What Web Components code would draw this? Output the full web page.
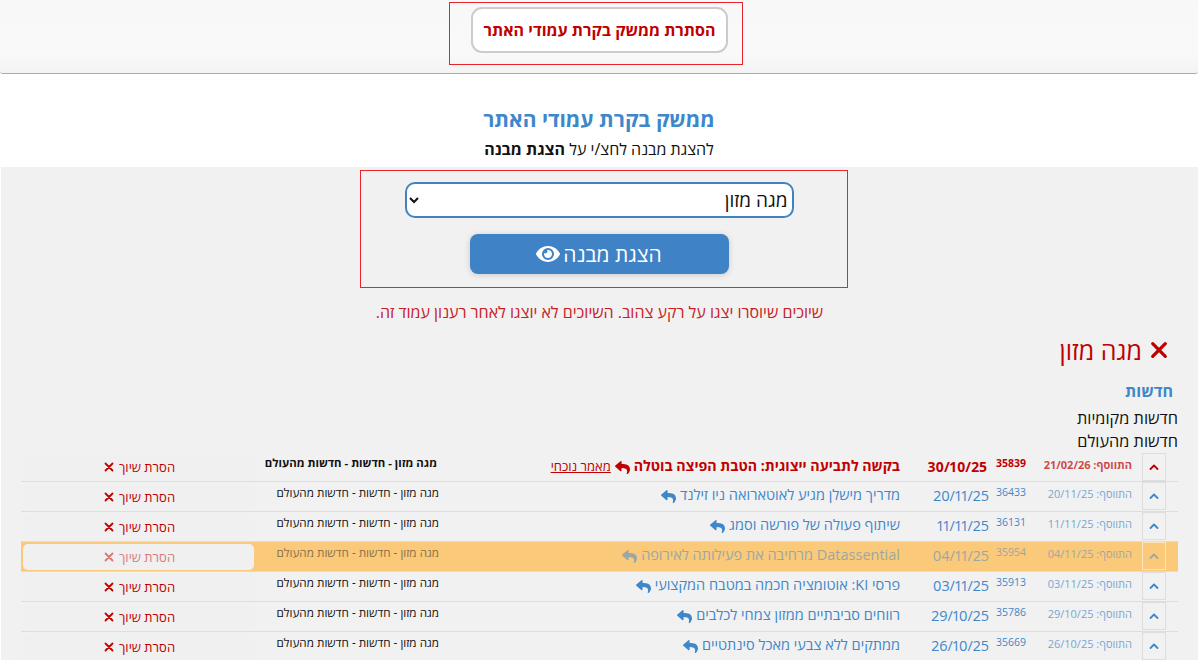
<!DOCTYPE html>
<html lang="he" dir="rtl">
<head>
<meta charset="utf-8">
<title>ממשק בקרת עמודי האתר</title>
<style>
  html, body { margin: 0; height: 660px; overflow: hidden; background: #fff; }
  body { font-family: "Open Sans", "Noto Sans", "Liberation Sans", sans-serif; color: #111; }
</style>
</head>
<body>
<top-bar></top-bar>
<panel-head></panel-head>
<div style="background:#f1f1f1;margin-inline-end:1px;height:493px;overflow:hidden">
  <structure-picker></structure-picker>
  <structure-view name="מגה מזון" section="חדשות">
    <span slot="subs">חדשות מקומיות</span>
    <span slot="subs">חדשות מהעולם</span>
    <link-row current added="21/02/26" num="35839" date="30/10/25" headline="בקשה לתביעה ייצוגית: הטבת הפיצה בוטלה"></link-row>
    <link-row added="20/11/25" num="36433" date="20/11/25" headline="מדריך מישלן מגיע לאוטארואה ניו זילנד"></link-row>
    <link-row added="11/11/25" num="36131" date="11/11/25" headline="שיתוף פעולה של פורשה וסמג"></link-row>
    <link-row removed added="04/11/25" num="35954" date="04/11/25" headline="Datassential מרחיבה את פעילותה לאירופה"></link-row>
    <link-row added="03/11/25" num="35913" date="03/11/25" headline="פרסי KI: אוטומציה חכמה במטבח המקצועי"></link-row>
    <link-row added="29/10/25" num="35786" date="29/10/25" headline="רווחים סביבתיים ממזון צמחי לכלבים"></link-row>
    <link-row added="26/10/25" num="35669" date="26/10/25" headline="ממתקים ללא צבעי מאכל סינתטיים"></link-row>
  </structure-view>
</div>

<script>
const ICONS = {
  reply: '<svg viewBox="0 0 512 512" fill="currentColor"><path d="M11.093 156.652l176.004-151.985C202.495-8.656 224 2.12 224 24.008v80.05c160.629 1.839 288 34.032 288 186.258 0 61.441-39.581 122.309-83.333 154.132-13.653 9.931-33.111-2.533-28.077-18.631 45.344-145.012-21.507-183.51-176.59-185.742V328c0 21.92-21.524 32.648-36.903 19.343l-176.004-152c-11.07-9.561-11.086-29.13 0-38.691z"/></svg>',
  eye: '<svg viewBox="0 0 576 512" fill="currentColor"><path d="M572.52 241.4C518.29 135.59 410.93 64 288 64S57.68 135.64 3.48 241.41a32.35 32.35 0 0 0 0 29.19C57.71 376.41 165.07 448 288 448s230.32-71.64 284.52-177.41a32.35 32.35 0 0 0 0-29.19zM288 400a144 144 0 1 1 144-144 143.93 143.93 0 0 1-144 144zm0-240a95.31 95.31 0 0 0-25.31 3.79 47.85 47.85 0 0 1-66.9 66.9A95.78 95.78 0 1 0 288 160z"/></svg>',
  times: '<svg viewBox="0 0 20 20" fill="none" stroke="currentColor" stroke-width="3.6" stroke-linecap="round"><path d="M3 3l14 14M17 3L3 17"/></svg>',
  up: '<svg viewBox="0 0 20 20" fill="none" stroke="currentColor" stroke-width="3.6" stroke-linecap="round" stroke-linejoin="round"><path d="M3 14l7-7 7 7"/></svg>'
};

class TopBar extends HTMLElement {
  constructor() {
    super();
    this.attachShadow({ mode: "open" }).innerHTML = `
      <style>
        :host {
          display: flex;
          justify-content: center;
          box-sizing: border-box;
          height: 74px;
          padding-top: 2px;
          background: linear-gradient(#f8f8f8, #f9f9f9 70%, #f4f4f4);
          border-bottom: 1px solid #aaa;
          border-radius: 0 0 3px 3px;
        }
        .frame {
          box-sizing: border-box;
          width: 294px;
          height: 63px;
          margin-right: 7px;
          border: 1px solid #e8252b;
          display: flex;
          justify-content: center;
          padding: 4px 0 0 8px;
        }
        button {
          box-sizing: border-box;
          width: 257px;
          height: 46px;
          background: #fff;
          border: 2px solid #ccc;
          border-radius: 11px;
          color: #c00000;
          font: 700 16px "Open Sans", sans-serif;
          padding: 0;
        }
      </style>
      <div class="frame"><button>הסתרת ממשק בקרת עמודי האתר</button></div>`;
  }
}

class PanelHead extends HTMLElement {
  constructor() {
    super();
    this.attachShadow({ mode: "open" }).innerHTML = `
      <style>
        :host {
          display: block;
          height: 93px;
          box-sizing: border-box;
          padding-top: 30px;
          text-align: center;
          background: #fff;
        }
        h2 {
          margin: 0;
          color: #3f87cb;
          font-size: 21px;
          font-weight: 700;
          line-height: 30px;
        }
        p { margin: 4px 0 0; font-size: 16px; line-height: 22px; color: #111; }
      </style>
      <h2>ממשק בקרת עמודי האתר</h2>
      <p>להצגת מבנה לחצ/י על <b>הצגת מבנה</b></p>`;
  }
}

class StructurePicker extends HTMLElement {
  constructor() {
    super();
    this.attachShadow({ mode: "open" }).innerHTML = `
      <style>
        :host {
          display: flex;
          flex-direction: column;
          align-items: center;
          text-align: center;
          padding-top: 3px;
        }
        .frame {
          box-sizing: border-box;
          width: 488px;
          height: 118px;
          margin-left: 8px;
          border: 1px solid #e8252b;
          display: flex;
          flex-direction: column;
          align-items: center;
          padding: 11px 9px 0 0;
          gap: 16px;
        }
        select {
          box-sizing: border-box;
          width: 389px;
          height: 36px;
          border: 2px solid #3f83c6;
          border-radius: 10px;
          background: #fff;
          color: #111;
          font: 19px "Open Sans", sans-serif;
          padding: 0 0 0 4px;
        }
        button {
          box-sizing: border-box;
          width: 259px;
          height: 40px;
          border: 0;
          border-radius: 8px;
          background: #3f83c6;
          color: #fff;
          font: 500 21px "Open Sans", sans-serif;
          box-shadow: 0 1px 6px rgba(0,0,0,.16);
          display: flex;
          align-items: center;
          justify-content: center;
          gap: 3px;
          padding: 0;
        }
        svg { width: 24px; height: 22px; display: block; }
        p { margin: 15px 0 0; color: #c8201f; font-size: 16px; line-height: 18px; }
      </style>
      <div class="frame">
        <select><option>מגה מזון</option></select>
        <button>הצגת מבנה ${ICONS.eye}</button>
      </div>
      <p>שיוכים שיוסרו יצגו על רקע צהוב. השיוכים לא יוצגו לאחר רענון עמוד זה.</p>`;
  }
}

class StructureView extends HTMLElement {
  constructor() {
    super();
    const name = this.getAttribute("name");
    const section = this.getAttribute("section");
    this.attachShadow({ mode: "open" }).innerHTML = `
      <style>
        :host { display: block; padding: 9px 20px 0 20px; }
        h3 {
          margin: 0 10px 0 0;
          display: flex;
          align-items: center;
          gap: 8px;
          color: #c00000;
          font-size: 25px;
          font-weight: 400;
          line-height: 40px;
        }
        h3 svg { width: 18px; height: 18px; }
        h4 {
          margin: 10px 5px 0 0;
          color: #3f87cb;
          font-size: 16px;
          font-weight: 700;
          line-height: 22px;
        }
        .subs {
          display: flex;
          flex-direction: column;
          font-size: 16.3px;
          line-height: 23px;
          margin-top: 5px;
        }
      </style>
      <h3>${ICONS.times}${name}</h3>
      <h4>${section}</h4>
      <div class="subs"><slot name="subs"></slot></div>
      <slot></slot>`;
  }
}

class LinkRow extends HTMLElement {
  constructor() {
    super();
    const current = this.hasAttribute("current");
    this.attachShadow({ mode: "open" }).innerHTML = `
      <style>
        :host {
          display: grid;
          grid-template-columns: 12px 24px 10px 106px 1fr;
          box-sizing: border-box;
          height: 30px;
          border-bottom: 1px solid #ddd;
          font-size: 13px;
          color: #3f87cb;
        }
        :host([current]) { color: #c00000; height: 29px; }
        :host([removed]) { background: #fac97a; }
        :host([removed]) .fade { opacity: .5; }
        .btn {
          grid-column: 2;
          box-sizing: border-box;
          width: 24px;
          height: 28px;
          border: 1px solid #ddd;
          display: flex;
          align-items: center;
          justify-content: center;
          background: #f1f1f1;
        }
        :host([removed]) .btn { background: transparent; border-color: #fff; }
        .btn svg { width: 10px; height: 10px; }
        .added { grid-column: 4; font-size: 11px; padding-top: 3px; line-height: 18px; opacity: .7; }
        .rest {
          grid-column: 5;
          display: grid;
          grid-template-columns: 37px 89px 461px 185px 1fr;
        }
        .num { font-size: 10.5px; line-height: 16px; padding-top: 2px; }
        .date { font-size: 14.5px; line-height: 22px; padding-top: 3px; font-variant-numeric: proportional-nums; }
        .title { font-size: 14.5px; line-height: 22px; padding-top: 2px; display: flex; gap: 4px; }
        .title svg { width: 15px; height: 15px; align-self: center; }
        .now { font-size: 13px; text-decoration: underline; font-weight: 400; }
        .cat { color: #111; font-size: 11.7px; line-height: 18px; padding-top: 1px; }
        :host([current]) .title, :host([current]) .date, :host([current]) .cat,
        :host([current]) .added, :host([current]) .num { font-weight: 700; }
        :host([current]) .title { font-size: 14.2px; }
        :host([current]) .now { font-size: 13px; }
        :host([current]) .cat { padding-right: 2px; font-size: 11.4px; }
        :host([current]) .date { padding-right: 2px; font-size: 14px; }
        :host([current]) .remove { margin-top: 1px; }
        .remove {
          box-sizing: border-box;
          margin: 2px 0 0 2px;
          padding-left: 2px;
          border-radius: 5px;
          background: #f0f0f0;
          color: #c00000;
          font-size: 13px;
          display: flex;
          align-items: center;
          justify-content: center;
          gap: 5px;
          height: 26px;
        }
        .remove svg { width: 10px; height: 10px; display: block; }
      </style>
      <div class="btn fade">${ICONS.up}</div>
      <div class="added fade">התווסף: ${this.getAttribute("added")}</div>
      <div class="rest">
        <div class="num fade">${this.getAttribute("num")}</div>
        <div class="date fade">${this.getAttribute("date")}</div>
        <div class="title fade">${this.getAttribute("headline")} ${ICONS.reply}${current ? '<span class="now">מאמר נוכחי</span>' : ""}</div>
        <div class="cat fade">מגה מזון - חדשות - חדשות מהעולם</div>
        <div class="remove"><span class="fade">הסרת שיוך</span><span class="fade">${ICONS.times}</span></div>
      </div>`;
  }
}

customElements.define("top-bar", TopBar);
customElements.define("panel-head", PanelHead);
customElements.define("structure-picker", StructurePicker);
customElements.define("structure-view", StructureView);
customElements.define("link-row", LinkRow);
</script>
</body>
</html>
